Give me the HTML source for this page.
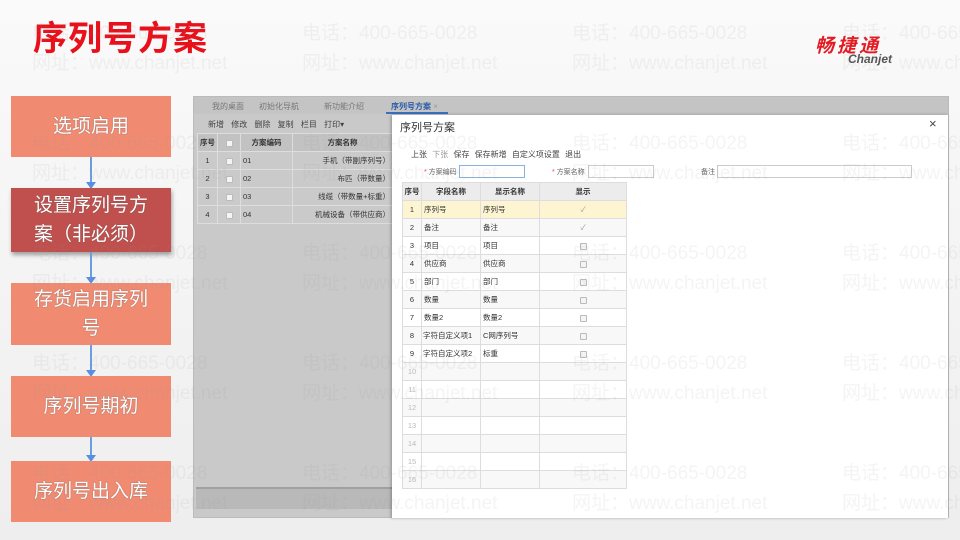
<!DOCTYPE html>
<html><head><meta charset="utf-8"><style>
*{margin:0;padding:0;box-sizing:border-box}
body{width:960px;height:540px;overflow:hidden;position:relative;background:#f2f2f2;font-family:"Liberation Sans","Noto Sans CJK SC",sans-serif;}
.a{position:absolute}
.title{left:33px;top:11px;font-size:34px;font-weight:bold;color:#e8101a;letter-spacing:1px}
.box{position:absolute;left:11px;width:160px;background:#f08b72;color:#fff;font-size:19px;text-align:center;display:flex;align-items:center;justify-content:center;line-height:29px;text-shadow:0 0 1px #555}
.arr{position:absolute;left:90px;width:2px;background:#6c9de0}
.arr:after{content:"";position:absolute;left:-4px;bottom:-2px;border-left:5px solid transparent;border-right:5px solid transparent;border-top:7px solid #5a8fe0}
table{border-collapse:collapse;position:absolute;font-size:7.5px;color:#333;table-layout:fixed}
td,th{border:1px solid #ddd;height:18px;padding:0 2px;font-weight:normal;white-space:nowrap;overflow:hidden}
.wm{position:absolute;font-size:19px;color:rgba(150,150,150,.10);white-space:nowrap;letter-spacing:0}
.cb{display:inline-block;width:7px;height:7px;border:1px solid #bbb;border-radius:1px;background:#f4f4f4;vertical-align:middle}
</style></head><body>
<div class="a" style="left:0;top:0;width:960px;height:540px;background:linear-gradient(180deg,#fafafa,#eeeeee)"></div>
<div class="a title">序列号方案</div>
<div class="a" style="left:815px;top:31px;font-size:19px;color:#e41b23;font-style:italic;font-weight:bold;letter-spacing:3px">畅捷通</div>
<div class="a" style="left:848px;top:52px;font-size:12px;color:#555;font-style:italic;font-weight:bold">Chanjet</div>

<div class="box" style="top:96px;height:61px">选项启用</div>
<div class="arr" style="top:157px;height:30px"></div>
<div class="box" style="top:188px;height:64px;background:#c0504d;box-shadow:1px 3px 4px rgba(0,0,0,.35)">设置序列号方<br>案（非必须）</div>
<div class="arr" style="top:252px;height:30px"></div>
<div class="box" style="top:283px;height:62px">存货启用序列<br>号</div>
<div class="arr" style="top:345px;height:30px"></div>
<div class="box" style="top:376px;height:61px">序列号期初</div>
<div class="arr" style="top:437px;height:23px"></div>
<div class="box" style="top:461px;height:61px">序列号出入库</div>

<!-- screenshot -->
<div class="a" style="left:193px;top:96px;width:756px;height:422px;background:#c9c9c9;border:1px solid #bbb"></div>
<div class="a" style="left:194px;top:97px;width:754px;height:17px;background:#c4c4c4;font-size:8px;color:#777">
<span class="a" style="left:18px;top:4px">我的桌面</span><span class="a" style="left:65px;top:4px">初始化导航</span><span class="a" style="left:130px;top:4px">新功能介绍</span><span class="a" style="left:197px;top:4px;color:#2a5aa8;font-weight:bold">序列号方案 <span style="color:#999;font-weight:normal">×</span></span>
<div class="a" style="left:192px;top:15px;width:62px;height:2px;background:#3a70c0"></div></div>
<div class="a" style="left:194px;top:114px;width:200px;height:18px;font-size:8px;color:#444"><span class="a" style="left:14px;top:5px;word-spacing:5px">新增 修改 删除 复制 栏目 打印▾</span></div>
<table style="left:197px;top:133px;width:196px;background:#cacaca;border-color:#bbb">
<tr style="background:#c2c2c2"><th style="width:20px;font-weight:bold;padding:0">序号</th><th style="width:23px"><span class="cb"></span></th><th style="width:52px;font-weight:bold">方案编码</th><th style="font-weight:bold">方案名称</th></tr>
<tr><td align=center>1</td><td align=center><span class="cb"></span></td><td>01</td><td align=right>手机（带副序列号）</td></tr>
<tr><td align=center>2</td><td align=center><span class="cb"></span></td><td>02</td><td align=right>布匹（带数量）</td></tr>
<tr><td align=center>3</td><td align=center><span class="cb"></span></td><td>03</td><td align=right>线缆（带数量+标重）</td></tr>
<tr><td align=center>4</td><td align=center><span class="cb"></span></td><td>04</td><td align=right>机械设备（带供应商）</td></tr>
</table>
<div class="a" style="left:196px;top:487px;width:196px;height:22px;background:#b9b9b9;border-top:2px solid #a0a0a0"></div>

<!-- dialog -->
<div class="a" style="left:392px;top:115px;width:556px;height:403px;background:#fff;box-shadow:-1px 0 3px rgba(0,0,0,.3)"></div>
<div class="a" style="left:400px;top:119px;font-size:11px;color:#333">序列号方案</div>
<div class="a" style="left:929px;top:116px;font-size:13px;color:#444">×</div>
<div class="a" style="left:411px;top:149px;font-size:8px;color:#444;word-spacing:3px">上张 <span style="color:#999">下张</span> 保存 保存新增 自定义项设置 退出</div>
<div class="a" style="left:424px;top:167px;font-size:7px;color:#666"><span style="color:#e44">*</span> 方案编码</div>
<div class="a" style="left:459px;top:165px;width:66px;height:13px;border:1px solid #8ab0dd"></div>
<div class="a" style="left:552px;top:167px;font-size:7px;color:#666"><span style="color:#e44">*</span> 方案名称</div>
<div class="a" style="left:588px;top:165px;width:66px;height:13px;border:1px solid #ccc"></div>
<div class="a" style="left:701px;top:167px;font-size:7px;color:#666">备注</div>
<div class="a" style="left:717px;top:165px;width:195px;height:13px;border:1px solid #ccc"></div>
<table style="left:402px;top:182px;width:225px">
<tr style="background:#ececec"><th style="width:19px;font-weight:bold;padding:0">序号</th><th style="width:59px;font-weight:bold">字段名称</th><th style="width:59px;font-weight:bold">显示名称</th><th style="font-weight:bold">显示</th></tr>
<tr style="background:#fdf5d2"><td align=center>1</td><td>序列号</td><td>序列号</td><td align=center style="color:#999">✓</td></tr>
<tr style="background:#f8f8f8"><td align=center>2</td><td>备注</td><td>备注</td><td align=center style="color:#999">✓</td></tr>
<tr><td align=center>3</td><td>项目</td><td>项目</td><td align=center><span class="cb"></span></td></tr>
<tr style="background:#f8f8f8"><td align=center>4</td><td>供应商</td><td>供应商</td><td align=center><span class="cb"></span></td></tr>
<tr><td align=center>5</td><td>部门</td><td>部门</td><td align=center><span class="cb"></span></td></tr>
<tr style="background:#f8f8f8"><td align=center>6</td><td>数量</td><td>数量</td><td align=center><span class="cb"></span></td></tr>
<tr><td align=center>7</td><td>数量2</td><td>数量2</td><td align=center><span class="cb"></span></td></tr>
<tr style="background:#f8f8f8"><td align=center>8</td><td style="padding:0 1px">字符自定义项1</td><td>C网序列号</td><td align=center><span class="cb"></span></td></tr>
<tr><td align=center>9</td><td style="padding:0 1px">字符自定义项2</td><td>标重</td><td align=center><span class="cb"></span></td></tr>
<tr style="background:#f8f8f8;color:#bbb"><td align=center>10</td><td></td><td></td><td></td></tr>
<tr style="color:#bbb"><td align=center>11</td><td></td><td></td><td></td></tr>
<tr style="background:#f8f8f8;color:#bbb"><td align=center>12</td><td></td><td></td><td></td></tr>
<tr style="color:#bbb"><td align=center>13</td><td></td><td></td><td></td></tr>
<tr style="background:#f8f8f8;color:#bbb"><td align=center>14</td><td></td><td></td><td></td></tr>
<tr style="color:#bbb"><td align=center>15</td><td></td><td></td><td></td></tr>
<tr style="background:#f8f8f8;color:#bbb"><td align=center>16</td><td></td><td></td><td></td></tr>
</table>

<!-- watermarks -->
<div class="wm" style="left:32px;top:18px">电话：400-665-0028</div><div class="wm" style="left:302px;top:18px">电话：400-665-0028</div><div class="wm" style="left:572px;top:18px">电话：400-665-0028</div><div class="wm" style="left:842px;top:18px">电话：400-665-0028</div>
<div class="wm" style="left:32px;top:48px">网址：www.chanjet.net</div><div class="wm" style="left:302px;top:48px">网址：www.chanjet.net</div><div class="wm" style="left:572px;top:48px">网址：www.chanjet.net</div><div class="wm" style="left:842px;top:48px">网址：www.chanjet.net</div>
<div class="wm" style="left:32px;top:128px">电话：400-665-0028</div><div class="wm" style="left:302px;top:128px">电话：400-665-0028</div><div class="wm" style="left:572px;top:128px">电话：400-665-0028</div><div class="wm" style="left:842px;top:128px">电话：400-665-0028</div>
<div class="wm" style="left:32px;top:158px">网址：www.chanjet.net</div><div class="wm" style="left:302px;top:158px">网址：www.chanjet.net</div><div class="wm" style="left:572px;top:158px">网址：www.chanjet.net</div><div class="wm" style="left:842px;top:158px">网址：www.chanjet.net</div>
<div class="wm" style="left:32px;top:238px">电话：400-665-0028</div><div class="wm" style="left:302px;top:238px">电话：400-665-0028</div><div class="wm" style="left:572px;top:238px">电话：400-665-0028</div><div class="wm" style="left:842px;top:238px">电话：400-665-0028</div>
<div class="wm" style="left:32px;top:268px">网址：www.chanjet.net</div><div class="wm" style="left:302px;top:268px">网址：www.chanjet.net</div><div class="wm" style="left:572px;top:268px">网址：www.chanjet.net</div><div class="wm" style="left:842px;top:268px">网址：www.chanjet.net</div>
<div class="wm" style="left:32px;top:348px">电话：400-665-0028</div><div class="wm" style="left:302px;top:348px">电话：400-665-0028</div><div class="wm" style="left:572px;top:348px">电话：400-665-0028</div><div class="wm" style="left:842px;top:348px">电话：400-665-0028</div>
<div class="wm" style="left:32px;top:378px">网址：www.chanjet.net</div><div class="wm" style="left:302px;top:378px">网址：www.chanjet.net</div><div class="wm" style="left:572px;top:378px">网址：www.chanjet.net</div><div class="wm" style="left:842px;top:378px">网址：www.chanjet.net</div>
<div class="wm" style="left:32px;top:458px">电话：400-665-0028</div><div class="wm" style="left:302px;top:458px">电话：400-665-0028</div><div class="wm" style="left:572px;top:458px">电话：400-665-0028</div><div class="wm" style="left:842px;top:458px">电话：400-665-0028</div>
<div class="wm" style="left:32px;top:488px">网址：www.chanjet.net</div><div class="wm" style="left:302px;top:488px">网址：www.chanjet.net</div><div class="wm" style="left:572px;top:488px">网址：www.chanjet.net</div><div class="wm" style="left:842px;top:488px">网址：www.chanjet.net</div>
</body></html>
